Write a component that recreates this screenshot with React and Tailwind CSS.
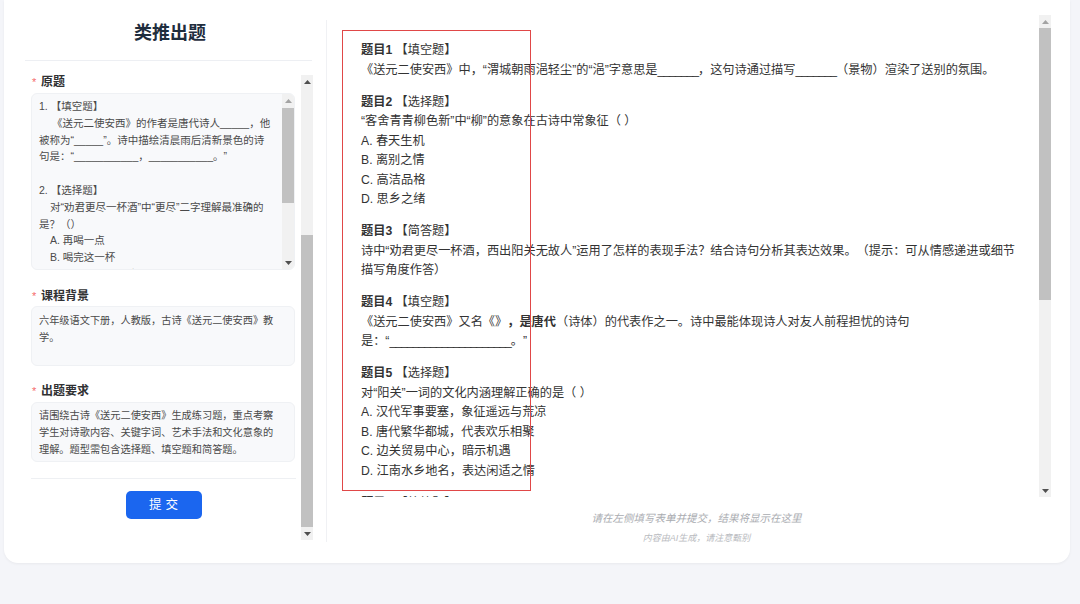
const Arrow = ({ up, light }) => (
  <div className="h-[13px] flex items-center justify-center">
    <svg width="7" height="4" viewBox="0 0 7 4">
      <polygon
        points={up ? '0,4 7,4 3.5,0' : '0,0 7,0 3.5,4'}
        fill={light ? '#a3a3a3' : '#505050'}
      />
    </svg>
  </div>
);

const Label = ({ children }) => (
  <div className="flex items-center h-[14px] leading-[14px]">
    <span className="w-[10px] pl-[1px] text-[11px] text-[#f56c6c]">*</span>
    <span className="text-[12px] font-bold text-[#303133]">{children}</span>
  </div>
);

const Blank = ({ children }) => <span className="tracking-[-1px]">{children}</span>;

const LeftPanel = () => (
  <div className="w-[322px] flex flex-col">
    <div className="h-[60px] flex items-center justify-center pl-[10px] pt-[6px]">
      <h1 className="text-[18px] leading-[24px] font-bold text-[#1f2d3d]">类推出题</h1>
    </div>
    <div className="ml-[21px] mr-[14px] h-px bg-[#edeff3]" />

    <div className="mt-[14px] ml-[21px] flex h-[465px]">
      <div className="w-[271px] pl-[6px] flex flex-col">
        <Label>原题</Label>
        <div className="mt-[4px] h-[177px] w-[264px] flex bg-[#f8f9fb] border border-[#eff1f4] rounded-[6px] overflow-hidden">
          <div className="flex-1 pl-[7px] pt-[4px] text-[10.5px] leading-[16.8px] text-[#4a4a4a] whitespace-nowrap overflow-hidden">
            <div>1. 【填空题】</div>
            <div className="pl-[13px]">《送元二使安西》的作者是唐代诗人_____，他</div>
            <div>被称为“_____”。诗中描绘清晨雨后清新景色的诗</div>
            <div>句是：“___________，___________。”</div>
            <div className="h-[16.8px]" />
            <div>2. 【选择题】</div>
            <div className="pl-[11px]">对“劝君更尽一杯酒”中“更尽”二字理解最准确的</div>
            <div>是？（）</div>
            <div className="pl-[11px]">A. 再喝一点</div>
            <div className="pl-[11px]">B. 喝完这一杯</div>
            <div className="pl-[11px]">C. 开怀畅饮，尽情享乐</div>
          </div>
          <div className="w-[12px] flex flex-col bg-[#f1f1f1]">
            <Arrow up light />
            <div className="h-[95px] bg-[#c1c1c1] mt-[1px]" />
            <div className="flex-1" />
            <Arrow />
          </div>
        </div>

        <div className="mt-[19px]">
          <Label>课程背景</Label>
        </div>
        <div className="mt-[3px] h-[60px] w-[264px] bg-[#f8f9fb] border border-[#eff1f4] rounded-[6px] pl-[7px] pt-[6px] text-[10.2px] leading-[16.8px] text-[#4a4a4a] whitespace-nowrap">
          <div>六年级语文下册，人教版，古诗《送元二使安西》教</div>
          <div>学。</div>
        </div>

        <div className="mt-[18px]">
          <Label>出题要求</Label>
        </div>
        <div className="mt-[4px] h-[60px] w-[264px] bg-[#f8f9fb] border border-[#eff1f4] rounded-[6px] pl-[7px] pt-[5px] text-[10.2px] leading-[16.8px] text-[#4a4a4a] whitespace-nowrap">
          <div>请围绕古诗《送元二使安西》生成练习题，重点考察</div>
          <div>学生对诗歌内容、关键字词、艺术手法和文化意象的</div>
          <div>理解。题型需包含选择题、填空题和简答题。</div>
        </div>

        <div className="mt-[16px] w-[265px] h-px bg-[#eef0f3]" />
        <div className="mt-[12px] w-[265px] flex justify-center">
          <button className="w-[76px] h-[28px] rounded-[5px] bg-[#1b66ef] text-white text-[12.5px] tracking-[4px] pl-[4px]">
            提交
          </button>
        </div>
      </div>

      <div className="ml-[5px] w-[12px] flex flex-col bg-[#f1f1f1]">
        <Arrow up />
        <div className="h-[147px]" />
        <div className="flex-1 bg-[#c1c1c1]" />
        <Arrow />
      </div>
    </div>
  </div>
);

const Q = ({ n, type, children }) => (
  <div className="mb-[12.5px]">
    <div>
      <span className="font-bold">题目{n}</span> 【{type}】
    </div>
    {children}
  </div>
);

const RightPanel = () => (
  <div className="flex-1 flex flex-col pt-[15px] pl-[15px] pr-[19px]">
    <div className="h-[482px] flex">
      <div className="relative flex-1 overflow-hidden pl-[19px] pt-[26px] pr-[10px] text-[12.2px] leading-[19.5px] text-[#333] whitespace-nowrap">
        <Q n="1" type="填空题">
          <div>
            《送元二使安西》中，“渭城朝雨浥轻尘”的“浥”字意思是<Blank>_______</Blank>，这句诗通过描写<Blank>_______</Blank>（景物）渲染了送别的氛围。
          </div>
        </Q>
        <Q n="2" type="选择题">
          <div>“客舍青青柳色新”中“柳”的意象在古诗中常象征（ ）</div>
          <div>A. 春天生机</div>
          <div>B. 离别之情</div>
          <div>C. 高洁品格</div>
          <div>D. 思乡之绪</div>
        </Q>
        <Q n="3" type="简答题">
          <div>诗中“劝君更尽一杯酒，西出阳关无故人”运用了怎样的表现手法？结合诗句分析其表达效果。（提示：可从情感递进或细节</div>
          <div>描写角度作答）</div>
        </Q>
        <Q n="4" type="填空题">
          <div>
            《送元二使安西》又名《》<span className="font-bold">，是唐代</span>（诗体）的代表作之一。诗中最能体现诗人对友人前程担忧的诗句
          </div>
          <div>
            是：“<Blank>_____________________</Blank>。”
          </div>
        </Q>
        <Q n="5" type="选择题">
          <div>对“阳关”一词的文化内涵理解正确的是（ ）</div>
          <div>A. 汉代军事要塞，象征遥远与荒凉</div>
          <div>B. 唐代繁华都城，代表欢乐相聚</div>
          <div>C. 边关贸易中心，暗示机遇</div>
          <div>D. 江南水乡地名，表达闲适之情</div>
        </Q>
        <Q n="6" type="简答题">
          <div>结合全诗，谈谈诗人是如何表达对友人的深情厚谊的。</div>
        </Q>

        <div className="absolute left-0 top-[15px] w-[189px] h-[461px] border-[1.5px] border-[#e04848]" />
      </div>

      <div className="w-[12px] flex flex-col bg-[#f1f1f1]">
        <Arrow up light />
        <div className="h-[272px] bg-[#c1c1c1]" />
        <div className="flex-1" />
        <Arrow />
      </div>
    </div>

    <div className="mt-[13px] text-center italic text-[10.5px] leading-[16px] text-[#a9abb0]">
      请在左侧填写表单并提交，结果将显示在这里
    </div>
    <div className="mt-[5px] text-center italic text-[9px] leading-[14px] text-[#b9bbc0]">
      内容由AI生成，请注意甄别
    </div>
  </div>
);

export default function App() {
  return (
    <div className="w-[1080px] h-[604px] overflow-hidden bg-[#f4f5f9] pl-[4px] pr-[10px] font-['Liberation_Sans','Noto_Sans_CJK_SC',sans-serif] [text-spacing-trim:space-all]">
      <div className="h-[563px] flex bg-white rounded-b-[14px] shadow-[0_1px_3px_rgba(0,0,0,0.05)]">
        <LeftPanel />
        <div className="w-px mt-[20px] h-[522px] bg-[#f0f1f4]" />
        <RightPanel />
      </div>
    </div>
  );
}
